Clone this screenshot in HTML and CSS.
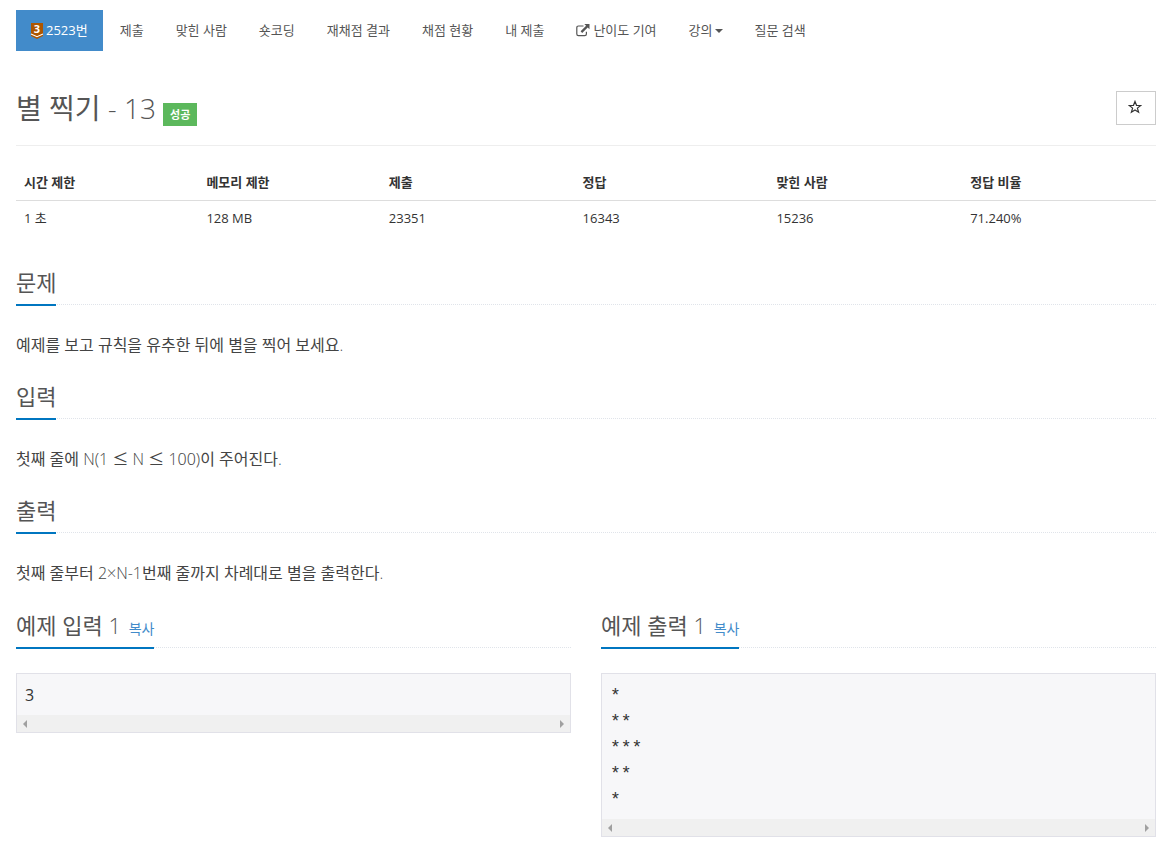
FILE: index.html
```html
<!DOCTYPE html>
<html lang="ko">
<head>
  <meta charset="utf-8">
  <title>2523번: 별 찍기 - 13</title>
  <link rel="stylesheet" href="styles.css">
</head>
<body>
  <div class="container">
    <nav>
      <ul class="problem-menu">
        <li class="active">
          <a href="#">
            <svg class="tier" viewBox="0 0 12 16" aria-hidden="true">
              <path d="M0 0H12V13L6 16L0 13Z" fill="#ad5600"/>
              <path d="M0 11L6 13.7L12 11" fill="none" stroke="#fff" stroke-width="1.1"/>
              <text x="6" y="10" text-anchor="middle">3</text>
            </svg>
            2523번
          </a>
        </li>
        <li><a href="#">제출</a></li>
        <li><a href="#">맞힌 사람</a></li>
        <li><a href="#">숏코딩</a></li>
        <li><a href="#">재채점 결과</a></li>
        <li><a href="#">채점 현황</a></li>
        <li><a href="#">내 제출</a></li>
        <li>
          <a href="#">
            <svg class="external" viewBox="0 0 14 13" aria-hidden="true">
              <path d="M7.5 2H2.5Q0.8 2 0.8 3.7V10Q0.8 11.7 2.5 11.7H8.7Q10.4 11.7 10.4 10V7.8" fill="none" stroke="#555" stroke-width="1.2"/>
              <path d="M8.3 0H13.5V5.2L11.7 3.4L6.2 8.9L4.6 7.3L10.1 1.8Z" fill="#555"/>
            </svg>
            난이도 기여
          </a>
        </li>
        <li><a href="#">강의<span class="caret"></span></a></li>
        <li><a href="#">질문 검색</a></li>
      </ul>
    </nav>

    <div class="page-header">
      <h1>별 찍기 - 13</h1>
      <span class="label">성공</span>
      <button type="button" class="favorite" aria-label="즐겨찾기">
        <svg viewBox="0 0 14 14" aria-hidden="true">
          <path d="M7 1.4L8.5 5.3L12.7 5.5L9.4 8.1L10.6 12.2L7 9.9L3.4 12.2L4.6 8.1L1.3 5.5L5.5 5.3Z" fill="none" stroke="#333" stroke-width="1.2"/>
        </svg>
      </button>
    </div>

    <table>
      <thead>
        <tr>
          <th class="limit">시간 제한</th>
          <th class="limit">메모리 제한</th>
          <th>제출</th>
          <th>정답</th>
          <th>맞힌 사람</th>
          <th>정답 비율</th>
        </tr>
      </thead>
      <tbody>
        <tr>
          <td>1 초</td>
          <td>128 MB</td>
          <td>23351</td>
          <td>16343</td>
          <td>15236</td>
          <td>71.240%</td>
        </tr>
      </tbody>
    </table>

    <section>
      <div class="headline"><h2>문제</h2></div>
      <p>예제를 보고 규칙을 유추한 뒤에 별을 찍어 보세요.</p>
    </section>

    <section>
      <div class="headline"><h2>입력</h2></div>
      <p>첫째 줄에 N(1 <span class="math">≤</span> N <span class="math">≤</span> 100)이 주어진다.</p>
    </section>

    <section>
      <div class="headline"><h2>출력</h2></div>
      <p>첫째 줄부터 2×N-1번째 줄까지 차례대로 별을 출력한다.</p>
    </section>

    <div class="samples">
      <section>
        <div class="headline"><h2>예제 입력 1 <button type="button" class="copy">복사</button></h2></div>
        <div class="sample">
          <pre>3</pre>
          <div class="scrollbar"></div>
        </div>
      </section>
      <section>
        <div class="headline"><h2>예제 출력 1 <button type="button" class="copy">복사</button></h2></div>
        <div class="sample">
          <pre class="stars">*
**
***
**
*</pre>
          <div class="scrollbar"></div>
        </div>
      </section>
    </div>
  </div>
</body>
</html>
```

FILE: styles.css
```css
* {
  box-sizing: border-box;
}
body {
  margin: 0;
  font-family: "Open Sans", "Noto Sans CJK KR", sans-serif;
  font-size: 13px;
  line-height: 21px;
  color: #333;
  background-color: #fff;
}
.container {
  padding: 10px 13px 11px 16px;
}
.problem-menu {
  display: flex;
  flex-wrap: wrap;
  gap: 2px;
  margin: 0;
  padding: 0;
  list-style: none;
}
.problem-menu a {
  display: flex;
  align-items: center;
  padding: 10px 15px;
  color: #555;
  text-decoration: none;
}
.problem-menu .active a {
  background-color: #428bca;
  color: #fff;
}
.tier {
  width: 12px;
  height: 16px;
  margin-right: 3px;
  overflow: visible;
}
.tier text {
  font-size: 11px;
  font-weight: 700;
  line-height: 11px;
  fill: #fff;
}
.external {
  width: 14px;
  height: 13px;
  margin-right: 3px;
}
.caret {
  margin-left: 2px;
  border-top: 4px solid #555;
  border-left: 4px solid transparent;
  border-right: 4px solid transparent;
}
.page-header {
  display: flex;
  align-items: flex-start;
  margin-top: 40px;
  padding-bottom: 19px;
  border-bottom: 1px solid #eee;
}
h1, h2, p {
  font-family: "Open Sans Light", "Open Sans", "Noto Sans CJK KR", sans-serif;
  font-weight: 400;
}
h1 {
  margin: 0;
  font-size: 28px;
  line-height: 34px;
  color: #555;
}
.label {
  margin: 12px 0 0 7px;
  padding: 0 7px;
  font-size: 11px;
  font-weight: 700;
  line-height: 23px;
  color: #fff;
  background-color: #5cb85c;
}
.favorite {
  display: flex;
  align-items: center;
  justify-content: center;
  width: 40px;
  height: 34px;
  margin-left: auto;
  padding: 0 2px 2px 0;
  background-color: #fff;
  border: 1px solid #ccc;
  cursor: pointer;
}
.favorite svg {
  width: 14px;
  height: 14px;
}
table {
  width: 100%;
  margin: 19px 0 28px;
  table-layout: fixed;
  border-collapse: collapse;
}
th, td {
  width: 17%;
  padding: 7px 8px;
  text-align: left;
}
th {
  border-bottom: 1px solid #ddd;
}
.limit {
  width: 16%;
}
.headline {
  margin: 17px 0 24px;
  border-bottom: 1px dotted #e0e4ea;
}
h2 {
  width: fit-content;
  margin: 0 0 -2px;
  padding-bottom: 4px;
  font-size: 22px;
  line-height: 36px;
  color: #555;
  border-bottom: 2px solid #0076c0;
}
p {
  margin: 0;
  font-size: 16px;
  line-height: 32px;
  color: #444;
}
.math {
  font-family: "Noto Sans CJK KR", sans-serif;
  line-height: 16px;
}
.samples {
  display: grid;
  grid-template-columns: 1fr 1fr;
  gap: 30px;
}
.samples .headline {
  margin: 18px 0 25px;
}
.copy {
  margin-left: 2px;
  padding: 0;
  font-family: inherit;
  font-size: 14px;
  line-height: 21px;
  color: #428bca;
  background: none;
  border: none;
  cursor: pointer;
}
.sample {
  background-color: #f7f7f9;
  border: 1px solid #e1e1e8;
}
pre {
  margin: 0;
  padding: 8px 8px 7px;
  font-family: "Open Sans", "Noto Sans CJK KR", sans-serif;
  font-size: 16px;
  line-height: 26px;
  color: #333;
}
.stars {
  padding: 9px 8px 6px;
  font-family: "Liberation Mono", monospace;
  font-size: 18px;
}
.scrollbar {
  display: flex;
  align-items: center;
  justify-content: space-between;
  height: 17px;
  padding: 0 6px;
  background-color: #f0f0f0;
}
.scrollbar::before, .scrollbar::after {
  content: "";
  border: 4px solid transparent;
}
.scrollbar::before {
  border-left: none;
  border-right-color: #a0a0a0;
}
.scrollbar::after {
  border-right: none;
  border-left-color: #a0a0a0;
}
```
